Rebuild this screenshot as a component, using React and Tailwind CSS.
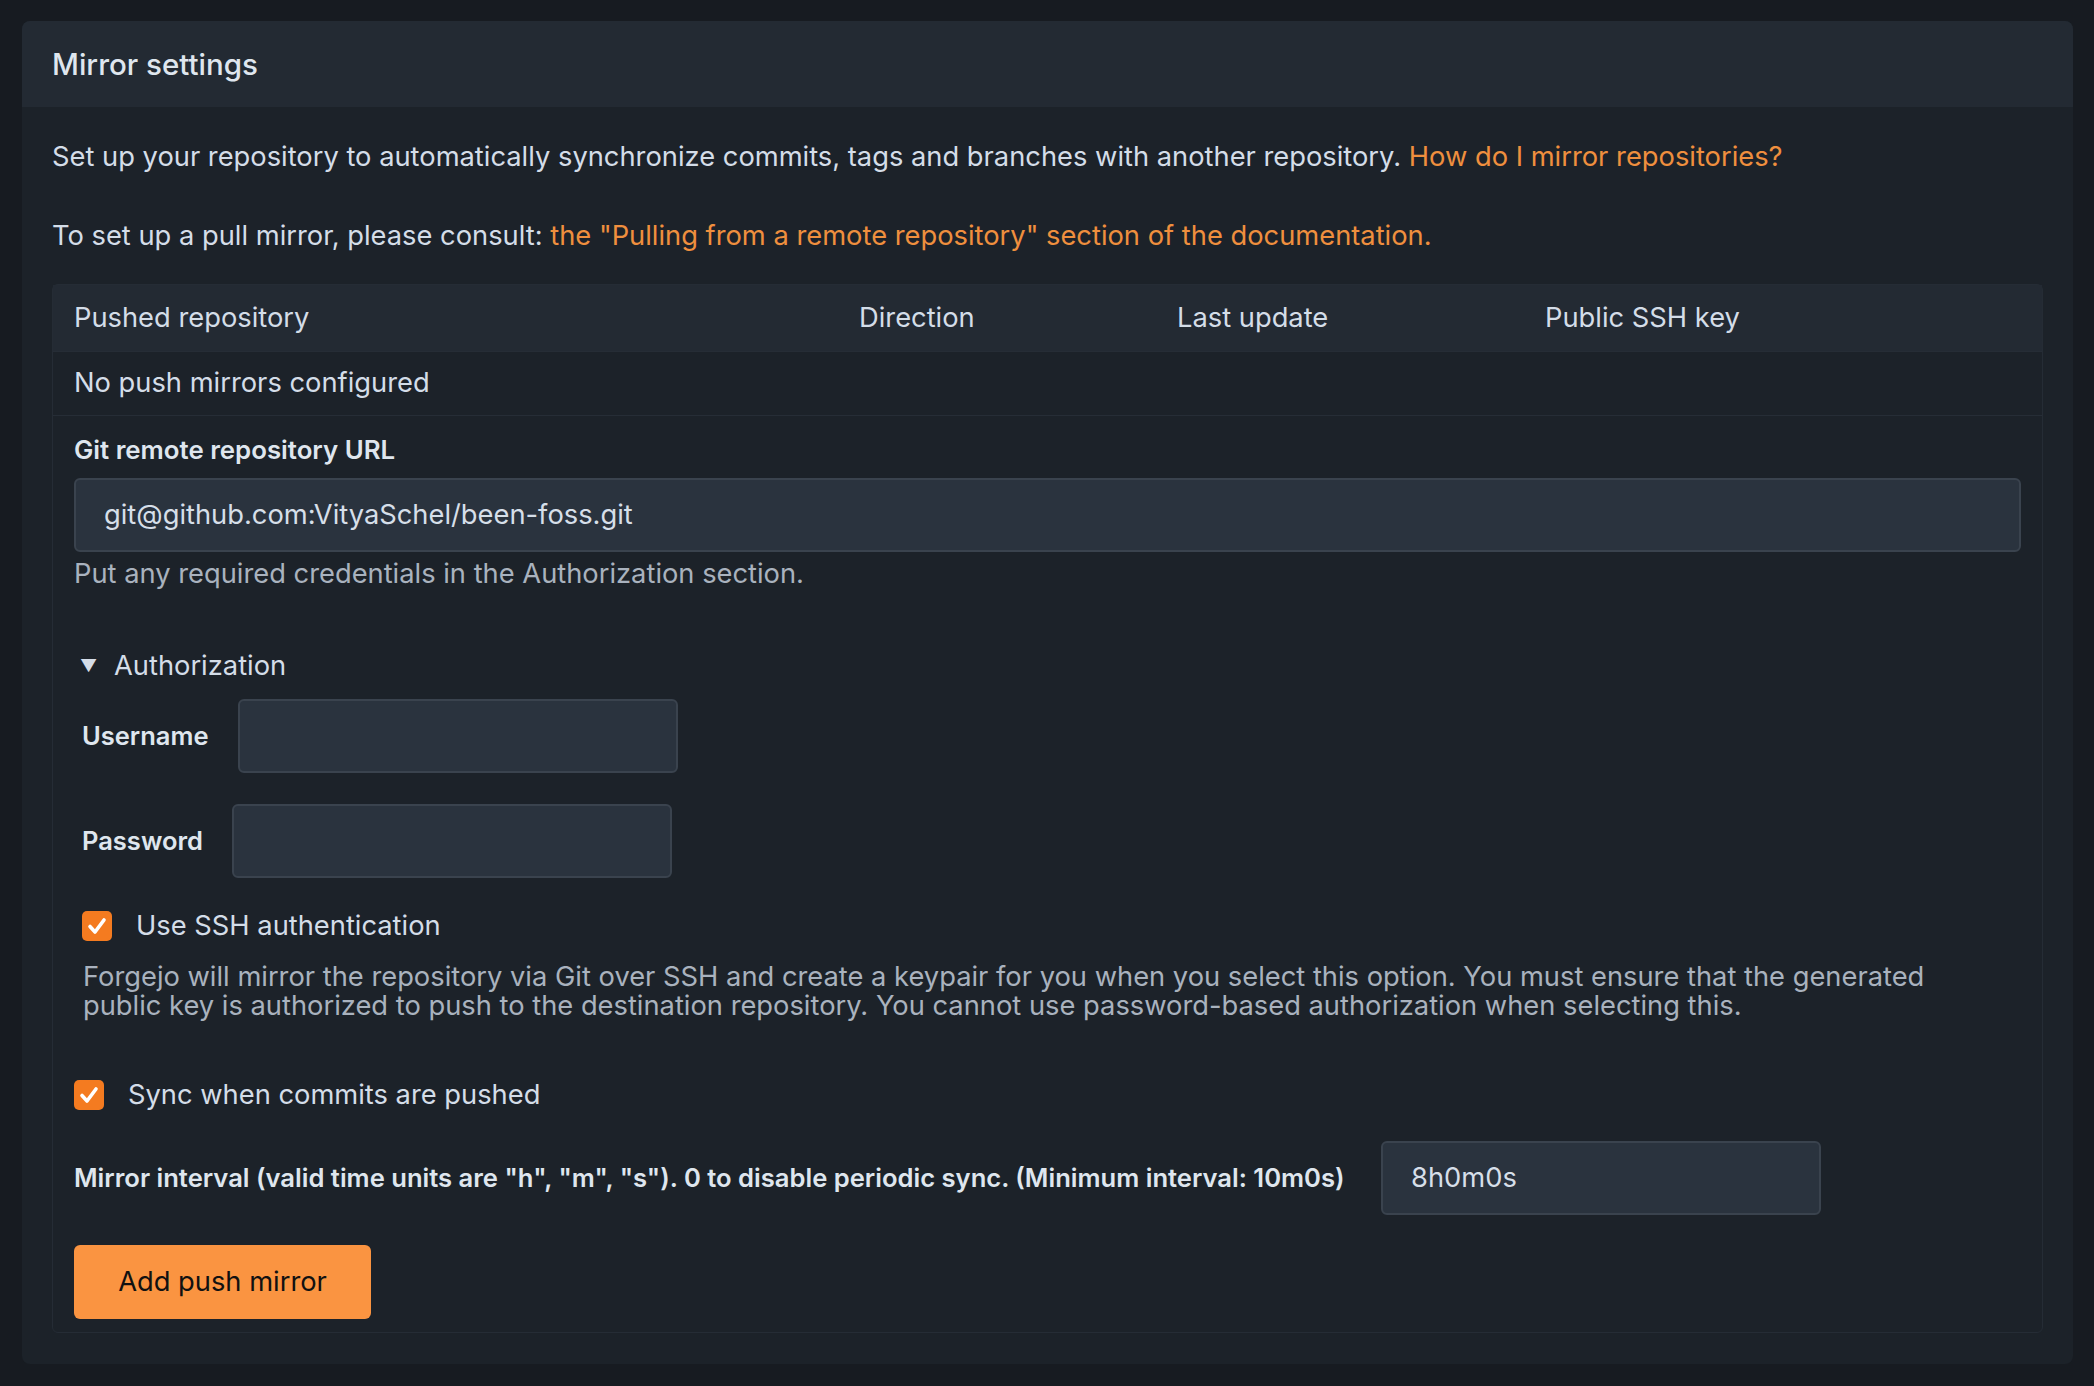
import React from 'react';

function Check({ className }) {
  return (
    <span className={`flex h-[30px] w-[30px] items-center justify-center rounded-[5px] bg-[#f47b20] ${className || ''}`}>
      <svg width="24" height="24" viewBox="0 0 24 24" fill="none">
        <polyline points="5,12.5 10,18 19,6" stroke="#fff" strokeWidth="3.6" strokeLinecap="round" strokeLinejoin="round" />
      </svg>
    </span>
  );
}

function TextInput({ value, className }) {
  return (
    <div className={`flex h-[74px] items-center rounded-[6px] border-2 border-[#3a434e] bg-[#2a333e] px-[28px] text-[27.3px] text-[#d6dfe9] ${className || ''}`}>
      {value}
    </div>
  );
}

export default function App() {
  return (
    <div className="min-h-screen w-full bg-[#171b21] pl-[22px] pr-[21px] pt-[21px] font-['Inter',sans-serif] text-[#d4dde8]">
      <div className="overflow-hidden rounded-[8px] bg-[#1c2229]">
        <div className="flex h-[86px] items-center bg-[#232a33] px-[30px] text-[29.5px] font-medium text-[#dfe6ee]">
          Mirror settings
        </div>

        <div className="px-[30px] pb-[31px] pt-[30px]">
          <p className="text-[27.3px] leading-[40px]">
            Set up your repository to automatically synchronize commits, tags and branches with another repository.{' '}
            <a className="text-[#ef8f3e]">How do I mirror repositories?</a>
          </p>
          <p className="mt-[39px] text-[27.3px] leading-[40px]">
            To set up a pull mirror, please consult:{' '}
            <a className="text-[#ef8f3e]">the "Pulling from a remote repository" section of the documentation.</a>
          </p>

          <div className="mt-[28px] rounded-[6px] border border-[#252c35]">
            <div className="grid h-[66px] grid-cols-[785px_318px_368px_1fr] items-center bg-[#232a33] pl-[21px] text-[27.3px]">
              <span>Pushed repository</span>
              <span>Direction</span>
              <span>Last update</span>
              <span>Public SSH key</span>
            </div>
            <div className="flex h-[64px] items-center border-t border-[#262d36] pl-[21px] text-[27.3px]">
              No push mirrors configured
            </div>

            <div className="border-t border-[#262d36] px-[21px] pb-[13px] pt-[17px]">
              <div className="h-[34px] text-[25.8px] font-semibold leading-[34px] text-[#dfe6ee]">Git remote repository URL</div>
              <TextInput className="mt-[11px]" value="git@github.com:VityaSchel/been-foss.git" />
              <div className="mt-[7px] text-[27.3px] leading-[30px] text-[#a9b2be]">
                Put any required credentials in the Authorization section.
              </div>

              <div className="mt-[59px] flex h-[36px] items-center text-[27.3px]">
                <span className="ml-[6px] w-[34px] text-[17px] leading-none">▼</span>
                <span>Authorization</span>
              </div>

              <div className="mt-[15px] flex items-center">
                <span className="ml-[8px] w-[156px] text-[25.5px] font-semibold text-[#dfe6ee]">Username</span>
                <TextInput className="w-[440px]" value="" />
              </div>
              <div className="mt-[31px] flex items-center">
                <span className="ml-[8px] w-[150px] text-[25.5px] font-semibold text-[#dfe6ee]">Password</span>
                <TextInput className="w-[440px]" value="" />
              </div>

              <label className="mt-[30px] flex h-[36px] items-center gap-[24px] pl-[8px] text-[27.3px]">
                <Check />
                <span>Use SSH authentication</span>
              </label>
              <div className="mt-[18px] pl-[9px] pr-[60px] text-[27.3px] leading-[29px] text-[#a9b2be]">
                Forgejo will mirror the repository via Git over SSH and create a keypair for you when you select this option. You must ensure that the generated public key is authorized to push to the destination repository. You cannot use password-based authorization when selecting this.
              </div>

              <label className="mt-[57px] flex h-[36px] items-center gap-[24px] text-[27.3px]">
                <Check />
                <span>Sync when commits are pushed</span>
              </label>

              <div className="mt-[28px] flex items-center">
                <span className="w-[1307px] text-[25.6px] font-semibold text-[#dfe6ee]">
                  Mirror interval (valid time units are "h", "m", "s"). 0 to disable periodic sync. (Minimum interval: 10m0s)
                </span>
                <TextInput className="w-[440px]" value="8h0m0s" />
              </div>

              <button className="mt-[30px] flex h-[74px] w-[297px] items-center justify-center rounded-[6px] bg-[#fa9441] text-[27.3px] text-[#111]">
                Add push mirror
              </button>
            </div>
          </div>
        </div>
      </div>
    </div>
  );
}
